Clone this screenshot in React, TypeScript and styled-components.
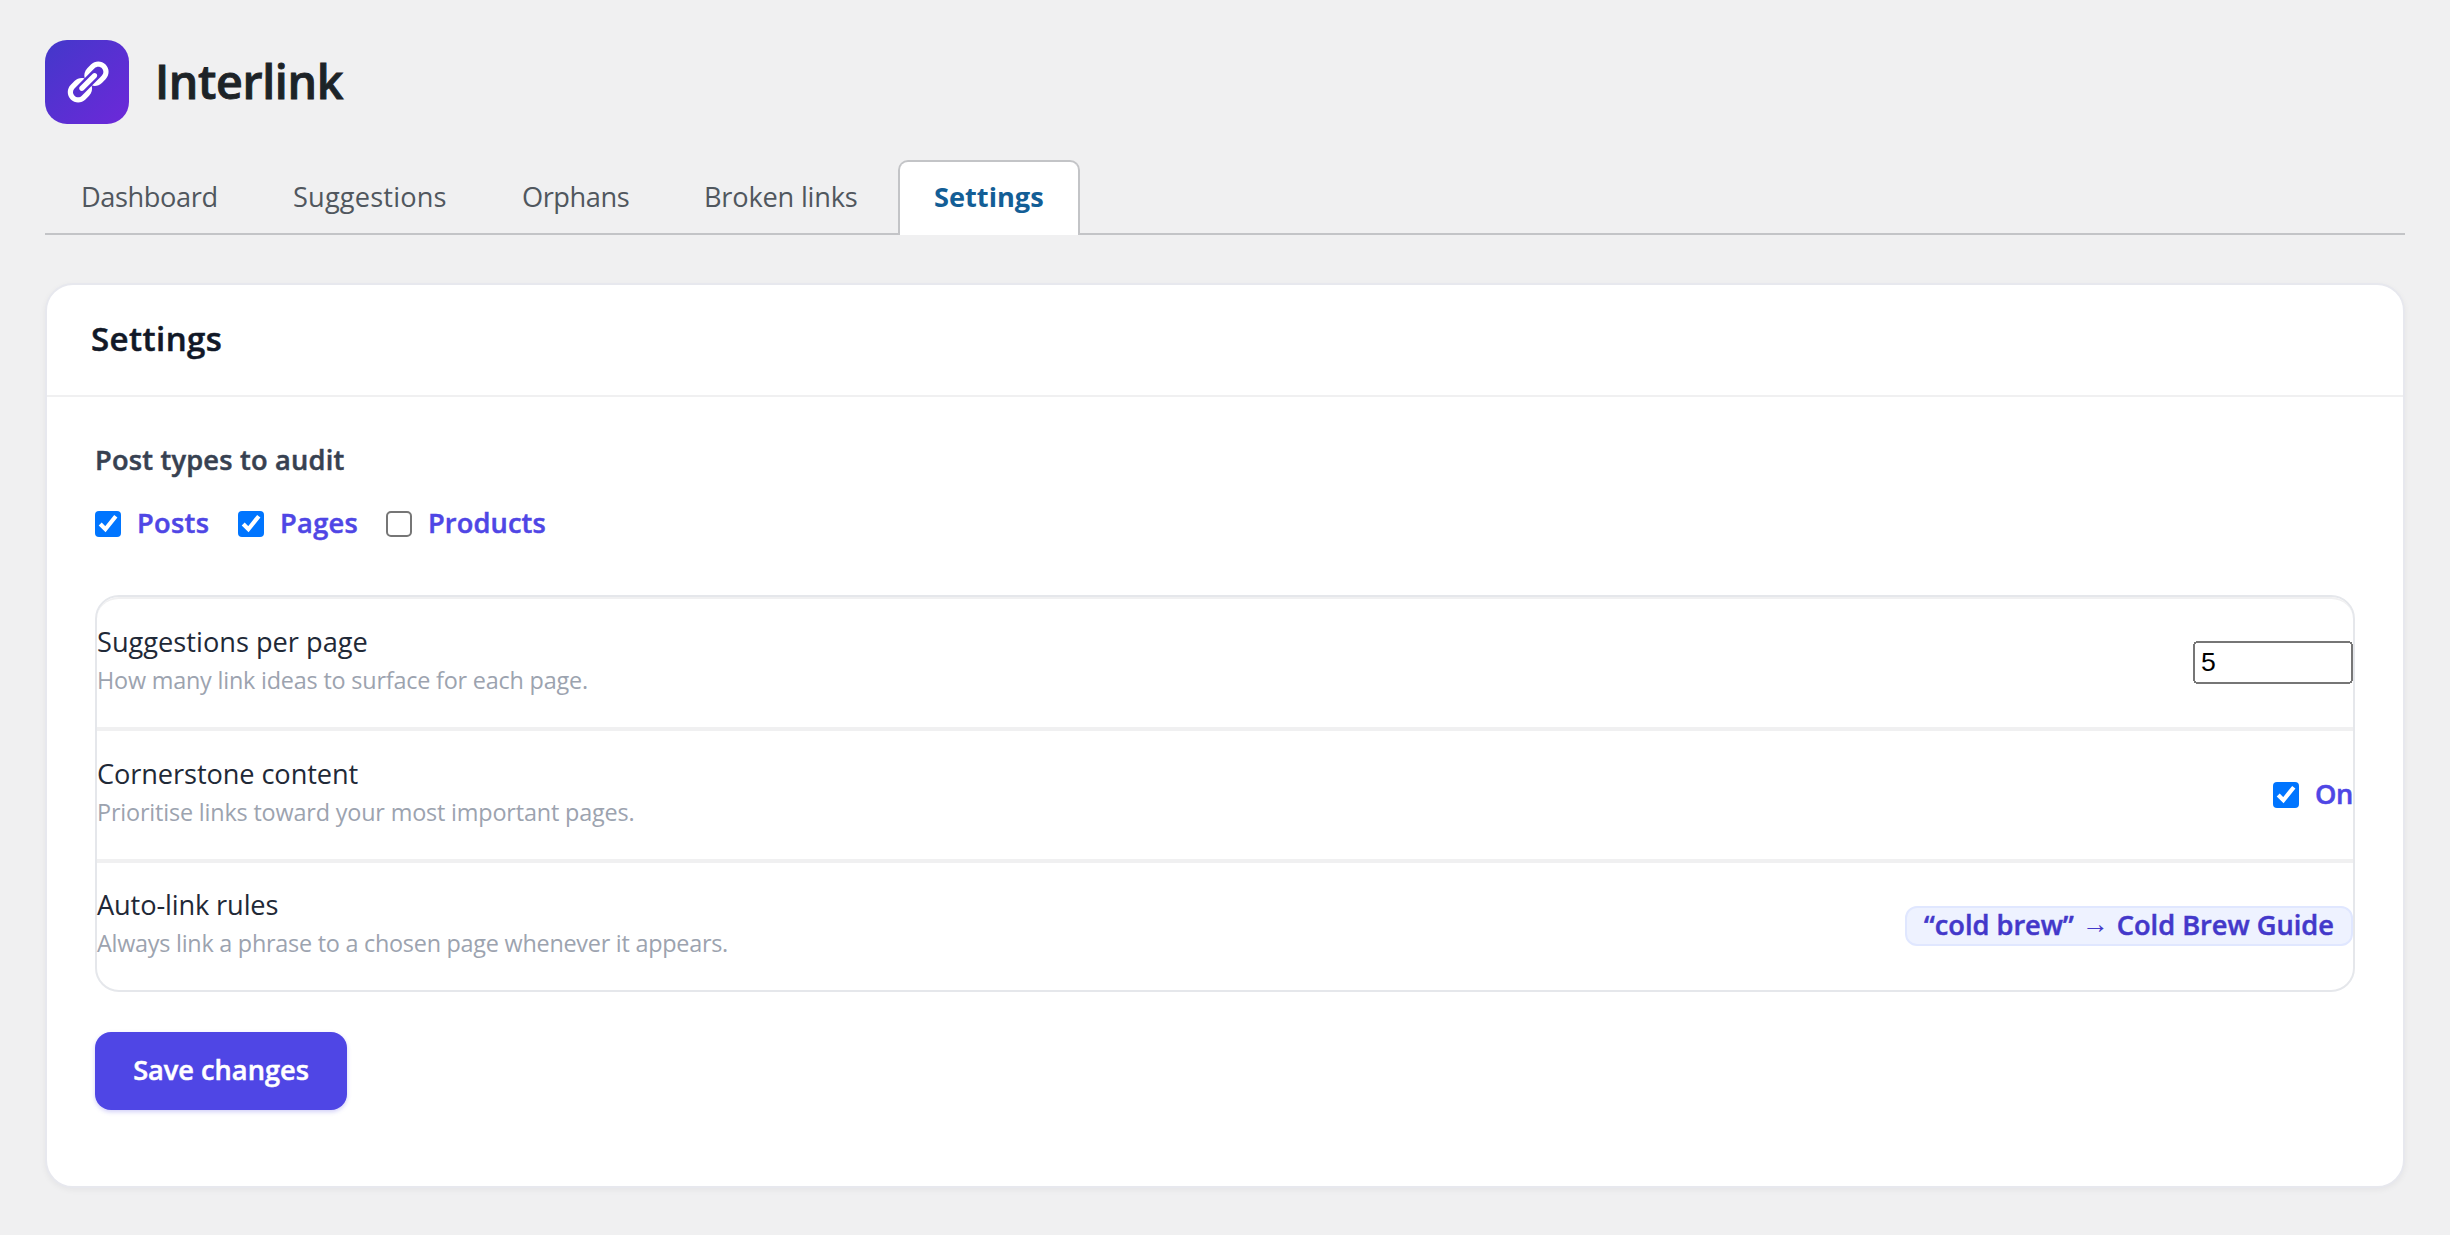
import React, { useState } from "react";
import styled, { createGlobalStyle, css } from "styled-components";

const GlobalStyle = createGlobalStyle`
  *, *::before, *::after { box-sizing: border-box; }
  body {
    margin: 0;
    background: #f0f0f1;
    font-family: "Open Sans", "Noto Sans", sans-serif;
    color: #1d2327;
  }
`;

const semibold = css`
  font-weight: 600;
  -webkit-text-stroke: 0.5px currentColor;
`;

const Page = styled.main`
  padding: 40px 45px 47px;
`;

const Brand = styled.header`
  display: flex;
  align-items: center;
  height: 84px;
  gap: 26px;
`;

const Logo = styled.div`
  display: flex;
  align-items: center;
  justify-content: center;
  width: 84px;
  height: 84px;
  border-radius: 22px;
  background: linear-gradient(135deg, #4338ca, #6d28d9);
`;

const Title = styled.h1`
  margin: 0;
  padding-bottom: 2px;
  font-size: 46.5px;
  line-height: 82px;
  letter-spacing: -0.35px;
  ${semibold}
  -webkit-text-stroke-width: 0.9px;
`;

const Tabs = styled.nav`
  display: flex;
  gap: 4px;
  height: 75px;
  margin-top: 36px;
  background: linear-gradient(#c3c4c7, #c3c4c7) bottom / 100% 2px no-repeat;
`;

const Tab = styled.button<{ $width: number; $spacing: number; $active?: boolean }>`
  flex: none;
  width: ${(p) => p.$width}px;
  margin: 0;
  padding: 15px 0 19px 34px;
  border: 2px solid transparent;
  border-bottom: 0;
  border-radius: 10px 10px 0 0;
  background: transparent;
  color: #50575e;
  font: 400 27.2px/39px "Open Sans", "Noto Sans", sans-serif;
  letter-spacing: ${(p) => p.$spacing}px;
  text-align: left;
  white-space: nowrap;
  ${(p) =>
    p.$active &&
    css`
      border-color: #c3c4c7;
      background: #fff;
      color: #135e96;
      font-weight: 700;
    `}
`;

const Card = styled.section`
  margin-top: 48px;
  height: 905px;
  border: 2px solid #e7e8ee;
  border-radius: 28px;
  background: #fff;
  box-shadow: 0 2px 6px rgba(16, 24, 40, 0.05);
`;

const CardHead = styled.div`
  height: 112px;
  padding: 27px 44px 0;
  border-bottom: 2px solid #f0f0f1;
`;

const CardTitle = styled.h2`
  margin: 0;
  color: #111827;
  font-size: 33px;
  line-height: 54px;
  letter-spacing: 0.45px;
  ${semibold}
`;

const CardBody = styled.div`
  padding: 42px 48px 0;
`;

const Label = styled.h3`
  margin: 0;
  color: #374151;
  font-size: 27.2px;
  line-height: 42px;
  letter-spacing: 0.22px;
  ${semibold}
`;

const Choices = styled.div`
  display: flex;
  height: 42px;
  margin-top: 22px;
`;

const Choice = styled.label<{ $width: number; $spacing: number }>`
  display: flex;
  align-items: center;
  gap: 16px;
  width: ${(p) => p.$width}px;
  color: #4f46e5;
  font-size: 27.2px;
  line-height: 39px;
  letter-spacing: ${(p) => p.$spacing}px;
  white-space: nowrap;
  ${semibold}
`;

const ChoiceText = styled.span`
  padding-bottom: 3px;
`;

const Check = styled.input.attrs({ type: "checkbox" })`
  flex: none;
  width: 13px;
  height: 13px;
  margin: 0;
  zoom: 2;
`;

const Rows = styled.div`
  margin-top: 50px;
  border: 2px solid #e5e7eb;
  border-radius: 24px;
`;

const Row = styled.div`
  display: flex;
  align-items: center;
  justify-content: space-between;
  height: 132px;
  border-top: 2px solid #f0f0f1;
  border-bottom: 2px solid #f0f0f1;
  &:first-child { border-radius: 22px 22px 0 0; }
  &:last-child { height: 129px; border-bottom: 0; }
`;

const RowText = styled.div`
  padding-bottom: 7px;
`;

const RowName = styled.div<{ $spacing: number }>`
  color: #1f2937;
  font-size: 27.2px;
  line-height: 40px;
  letter-spacing: ${(p) => p.$spacing}px;
`;

const RowHint = styled.div<{ $spacing: number }>`
  color: #9ca3af;
  font-size: 23.4px;
  line-height: 36px;
  letter-spacing: ${(p) => p.$spacing}px;
`;

const CountInput = styled.input`
  width: 80px;
  height: 21.5px;
  margin: 0 0 0.5px;
  font-family: "Liberation Sans", Arial, sans-serif;
  font-size: 13.333px;
  zoom: 2;
`;

const Chip = styled.span`
  display: flex;
  height: 40px;
  width: 448px;
  margin-bottom: 1px;
  padding: 0 17px;
  border: 2px solid #e0e7ff;
  border-radius: 12px;
  background: #eef2ff;
  color: #4338ca;
  font-size: 27.2px;
  line-height: 33px;
  white-space: nowrap;
  ${semibold}
`;

const Arrow = styled.span`
  width: 43px;
  font: 400 27px/36px "Liberation Mono", monospace;
  -webkit-text-stroke: 0;
  text-align: center;
`;

const Save = styled.button`
  display: block;
  width: 252px;
  height: 78px;
  margin-top: 40px;
  padding: 0 0 3px;
  border: 0;
  border-radius: 16px;
  background: #4f46e5;
  box-shadow: 0 2px 4px rgba(79, 70, 229, 0.25);
  color: #fff;
  font: 600 27.2px/39px "Open Sans", "Noto Sans", sans-serif;
  -webkit-text-stroke: 0.5px currentColor;
`;

const tabs = [
  { name: "Dashboard", width: 208, spacing: -0.41 },
  { name: "Suggestions", width: 225, spacing: 0.16 },
  { name: "Orphans", width: 178, spacing: -0.45 },
  { name: "Broken links", width: 226, spacing: -0.2 },
  { name: "Settings", width: 182, spacing: 0 },
];

const types = [
  { name: "Posts", width: 143, on: true, spacing: 0.35 },
  { name: "Pages", width: 148, on: true, spacing: 0.35 },
  { name: "Products", width: 180, on: false, spacing: 0.13 },
];

export default function App() {
  const [active, setActive] = useState("Settings");
  return (
    <>
      <GlobalStyle />
      <Page>
        <Brand>
          <Logo>
            <svg width="48" height="48" viewBox="0 0 20 20" fill="#fff">
              <path d="M17.74 2.76c1.68 1.69 1.68 4.41 0 6.1l-1.53 1.52c-1.12 1.12-2.7 1.47-4.14 1.09l2.62-2.61.76-.77.76-.76c.84-.84.84-2.2 0-3.04-.84-.85-2.2-.85-3.04 0l-.77.76-3.38 3.38c-.37-1.44-.02-3.02 1.1-4.14l1.52-1.53c1.69-1.68 4.42-1.68 6.1 0zM8.59 13.43l5.34-5.34c.42-.42.42-1.1 0-1.52-.44-.43-1.13-.39-1.53 0l-5.33 5.34c-.42.42-.42 1.1 0 1.52.44.43 1.13.39 1.52 0zm-.76 2.29l4.14-4.15c.38 1.44.03 3.02-1.09 4.14l-1.52 1.53c-1.69 1.68-4.41 1.68-6.1 0-1.68-1.68-1.68-4.42 0-6.1l1.53-1.52c1.12-1.12 2.7-1.47 4.14-1.1l-4.14 4.15c-.85.84-.85 2.2 0 3.05.84.84 2.2.84 3.04 0z" />
            </svg>
          </Logo>
          <Title>Interlink</Title>
        </Brand>
        <Tabs>
          {tabs.map((t) => (
            <Tab
              key={t.name}
              $width={t.width}
              $spacing={t.spacing}
              $active={t.name === active}
              onClick={() => setActive(t.name)}
            >
              {t.name}
            </Tab>
          ))}
        </Tabs>
        <Card>
          <CardHead>
            <CardTitle>Settings</CardTitle>
          </CardHead>
          <CardBody>
            <Label>Post types to audit</Label>
            <Choices>
              {types.map((t) => (
                <Choice key={t.name} $width={t.width} $spacing={t.spacing}>
                  <Check defaultChecked={t.on} />
                  <ChoiceText>{t.name}</ChoiceText>
                </Choice>
              ))}
            </Choices>
            <Rows>
              <Row>
                <RowText>
                  <RowName $spacing={0}>Suggestions per page</RowName>
                  <RowHint $spacing={-0.2}>How many link ideas to surface for each page.</RowHint>
                </RowText>
                <CountInput type="number" defaultValue={5} />
              </Row>
              <Row>
                <RowText>
                  <RowName $spacing={-0.1}>Cornerstone content</RowName>
                  <RowHint $spacing={-0.17}>Prioritise links toward your most important pages.</RowHint>
                </RowText>
                <Choice $width={80} $spacing={-0.5}>
                  <Check defaultChecked />
                  <ChoiceText>On</ChoiceText>
                </Choice>
              </Row>
              <Row>
                <RowText>
                  <RowName $spacing={-0.13}>Auto-link rules</RowName>
                  <RowHint $spacing={-0.25}>Always link a phrase to a chosen page whenever it appears.</RowHint>
                </RowText>
                <Chip>
                  <span>“cold brew”</span>
                  <Arrow>→</Arrow>
                  <span>Cold Brew Guide</span>
                </Chip>
              </Row>
            </Rows>
            <Save>Save changes</Save>
          </CardBody>
        </Card>
      </Page>
    </>
  );
}
